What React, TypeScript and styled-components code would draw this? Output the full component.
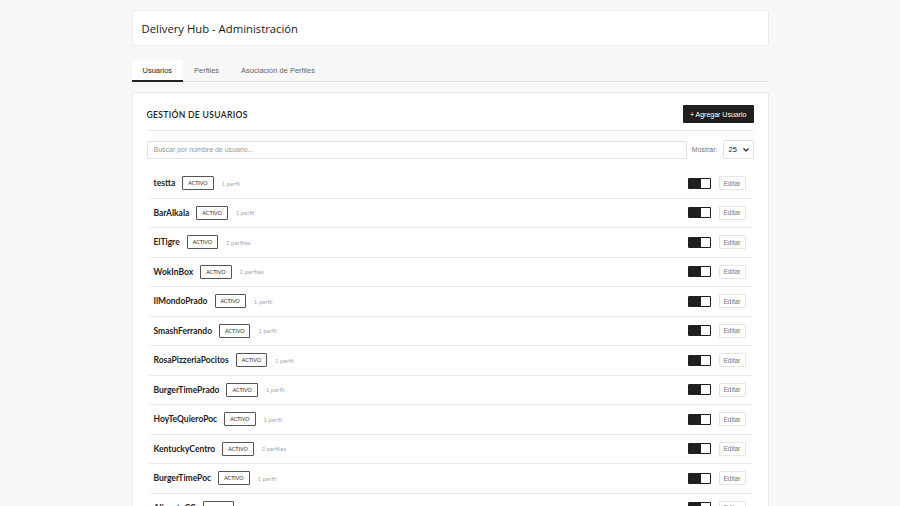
import styled, { createGlobalStyle } from "styled-components";

const GlobalStyle = createGlobalStyle`
  body {
    margin: 0;
    background: #f8f8f8;
    font-family: Lato, "Open Sans", sans-serif;
    color: #222;
  }
`;

const Page = styled.div`
  width: 637px;
  margin: 0 auto;
  padding-top: 10px;
`;

const HeaderCard = styled.div`
  height: 36px;
  background: #fff;
  border: 1px solid #ececec;
  border-radius: 2px;
  display: flex;
  align-items: center;
  padding: 0 9px;
  box-sizing: border-box;
`;

const HeaderTitle = styled.h1`
  margin: 0;
  font-family: "Open Sans", sans-serif;
  font-size: 11.3px;
  font-weight: 500;
  color: #1a1a1a;
`;

const TabBar = styled.div`
  display: flex;
  margin-top: 14px;
  border-bottom: 1px solid #e2e2e2;
  height: 21px;
`;

const Tab = styled.div<{ $active?: boolean }>`
  padding: 0 11px;
  font-family: "Liberation Sans", Arial, sans-serif;
  font-size: 7.5px;
  display: flex;
  align-items: center;
  color: ${(p) => (p.$active ? "#222" : "#666")};
  background: ${(p) => (p.$active ? "#fff" : "transparent")};
  border-bottom: 2px solid ${(p) => (p.$active ? "#222" : "transparent")};
  margin-bottom: -1px;
`;

const MainCard = styled.div`
  margin-top: 10px;
  background: #fff;
  border: 1px solid #ececec;
  border-radius: 2px;
  padding: 12px 14px 0 14px;
`;

const CardHead = styled.div`
  display: flex;
  justify-content: space-between;
  align-items: center;
  padding-bottom: 7px;
  border-bottom: 1px solid #ececec;
`;

const CardTitle = styled.h2`
  margin: 1px 0 0 0;
  font-size: 8.6px;
  font-weight: 600;
  letter-spacing: 0.3px;
  color: #222;
`;

const AddButton = styled.button`
  height: 18px;
  padding: 0 7px;
  background: #1f1f1f;
  color: #fff;
  border: 0;
  border-radius: 1px;
  font-family: "Liberation Sans", Arial, sans-serif;
  font-size: 7px;
`;

const Toolbar = styled.div`
  display: flex;
  align-items: center;
  margin-top: 9px;
  gap: 5px;
`;

const Search = styled.input`
  flex: 1;
  height: 18px;
  box-sizing: border-box;
  border: 1px solid #e3e3e3;
  border-radius: 1px;
  padding: 0 6px;
  font-family: "Liberation Sans", Arial, sans-serif;
  font-size: 7px;
  color: #444;
  outline: none;
  &::placeholder {
    color: #999;
  }
`;

const ShowLabel = styled.span`
  font-family: "Liberation Sans", Arial, sans-serif;
  font-size: 7px;
  color: #777;
`;

const Select = styled.div`
  width: 31px;
  height: 19px;
  box-sizing: border-box;
  border: 1px solid #e3e3e3;
  display: flex;
  align-items: center;
  justify-content: space-between;
  padding: 0 4px 0 5px;
  font-family: "Liberation Sans", Arial, sans-serif;
  font-size: 7.5px;
  color: #222;
`;

const List = styled.div`
  margin-top: 10px;
  padding: 0 2px;
`;

const Row = styled.div`
  height: 29.5px;
  box-sizing: border-box;
  border-bottom: 1px solid #ececec;
  display: flex;
  align-items: center;
  padding: 0 6px 0 5px;
`;

const Name = styled.span`
  font-size: 8.5px;
  font-weight: 700;
  color: #222;
`;

const Badge = styled.span`
  margin-left: 7px;
  border: 1px solid #555;
  border-radius: 1px;
  padding: 3px 5px;
  font-size: 5.3px;
  font-weight: 400;
  color: #222;
`;

const Profiles = styled.span`
  margin-left: 8px;
  font-size: 6px;
  color: #aaa;
`;

const Spacer = styled.div`
  flex: 1;
`;

const Toggle = styled.div`
  width: 23px;
  height: 11px;
  background: #1f1f1f;
  border-radius: 1px;
  display: flex;
  justify-content: flex-end;
  align-items: center;
  padding: 0 1px;
  box-sizing: border-box;
`;

const Knob = styled.div`
  width: 9px;
  height: 9px;
  background: #fff;
`;

const EditButton = styled.button`
  margin-left: 8px;
  width: 27px;
  height: 14px;
  background: #fff;
  border: 1px solid #e6e6e6;
  border-radius: 1px;
  font-family: "Liberation Sans", Arial, sans-serif;
  font-size: 6.5px;
  color: #777;
  padding: 0;
`;

const users: [string, number][] = [
  ["testta", 1],
  ["BarAlkala", 1],
  ["ElTigre", 2],
  ["WokInBox", 2],
  ["IlMondoPrado", 1],
  ["SmashFerrando", 1],
  ["RosaPizzeriaPocitos", 1],
  ["BurgerTimePrado", 1],
  ["HoyTeQuieroPoc", 1],
  ["KentuckyCentro", 2],
  ["BurgerTimePoc", 1],
  ["AlicanteCC", 1],
];

export default function App() {
  return (
    <>
      <GlobalStyle />
      <Page>
        <HeaderCard>
          <HeaderTitle>Delivery Hub - Administración</HeaderTitle>
        </HeaderCard>
        <TabBar>
          <Tab $active>Usuarios</Tab>
          <Tab>Perfiles</Tab>
          <Tab>Asociación de Perfiles</Tab>
        </TabBar>
        <MainCard>
          <CardHead>
            <CardTitle>GESTIÓN DE USUARIOS</CardTitle>
            <AddButton>+ Agregar Usuario</AddButton>
          </CardHead>
          <Toolbar>
            <Search placeholder="Buscar por nombre de usuario..." />
            <ShowLabel>Mostrar:</ShowLabel>
            <Select>
              <span>25</span>
              <svg width="6" height="4" viewBox="0 0 6 4">
                <path d="M0.5 0.5 L3 3 L5.5 0.5" fill="none" stroke="#222" strokeWidth="1.2" />
              </svg>
            </Select>
          </Toolbar>
          <List>
            {users.map(([name, n]) => (
              <Row key={name}>
                <Name>{name}</Name>
                <Badge>ACTIVO</Badge>
                <Profiles>{n === 1 ? "1 perfil" : `${n} perfiles`}</Profiles>
                <Spacer />
                <Toggle>
                  <Knob />
                </Toggle>
                <EditButton>Editar</EditButton>
              </Row>
            ))}
          </List>
        </MainCard>
      </Page>
    </>
  );
}
